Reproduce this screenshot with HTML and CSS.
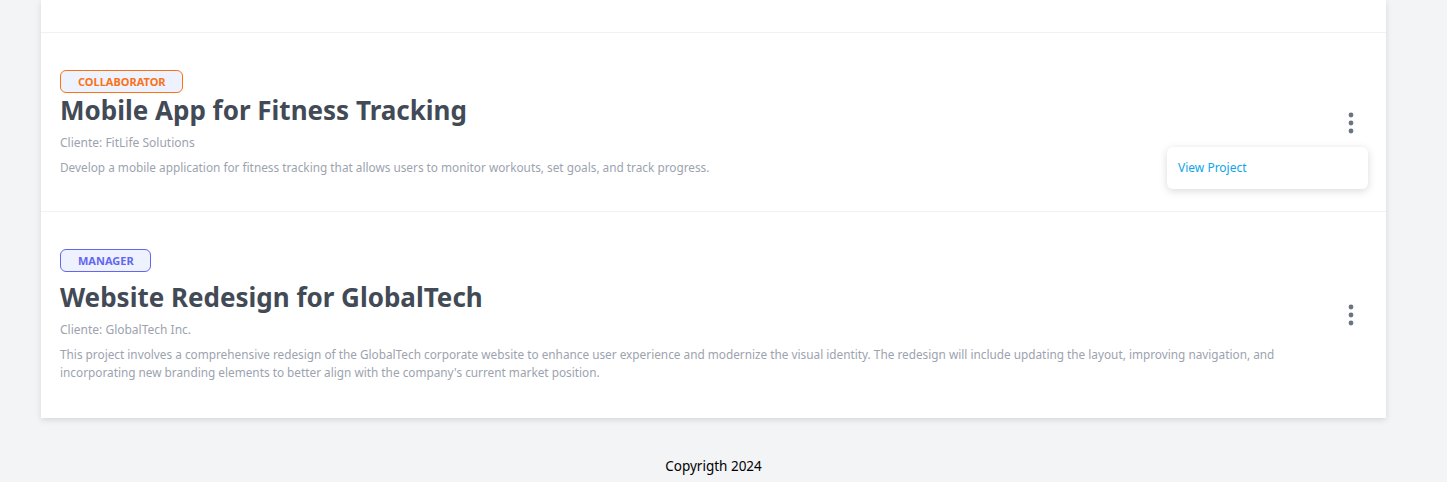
FILE: index.html
```html
<!DOCTYPE html>
<html>
<head>
<meta charset="utf-8">
<link rel="stylesheet" href="styles.css">
</head>
<body>
<main class="page">
  <section class="card">
    <div class="row row-top"></div>
    <div class="row">
      <div class="info">
        <span class="badge badge-collab">Collaborator</span>
        <h2 class="title">Mobile App for Fitness Tracking</h2>
        <p class="client">Cliente: FitLife Solutions</p>
        <p class="desc">Develop a mobile application for fitness tracking that allows users to monitor workouts, set goals, and track progress.</p>
      </div>
      <div class="actions">
        <button class="kebab" aria-label="menu">
          <svg width="6" height="22" viewBox="0 0 6 22"><circle cx="3" cy="3" r="2.4" fill="#6b7280"/><circle cx="3" cy="11" r="2.4" fill="#6b7280"/><circle cx="3" cy="19" r="2.4" fill="#6b7280"/></svg>
        </button>
        <div class="menu"><a class="menu-item" href="#">View Project</a></div>
      </div>
    </div>
    <div class="row row-last">
      <div class="info">
        <span class="badge badge-manager">Manager</span>
        <h2 class="title title-spaced">Website Redesign for GlobalTech</h2>
        <p class="client">Cliente: GlobalTech Inc.</p>
        <p class="desc">This project involves a comprehensive redesign of the GlobalTech corporate website to enhance user experience and modernize the visual identity. The redesign will include updating the layout, improving navigation, and incorporating new branding elements to better align with the company's current market position.</p>
      </div>
      <div class="actions">
        <button class="kebab" aria-label="menu">
          <svg width="6" height="22" viewBox="0 0 6 22"><circle cx="3" cy="3" r="2.4" fill="#6b7280"/><circle cx="3" cy="11" r="2.4" fill="#6b7280"/><circle cx="3" cy="19" r="2.4" fill="#6b7280"/></svg>
        </button>
      </div>
    </div>
  </section>
  <footer class="footer">Copyrigth 2024</footer>
</main>
</body>
</html>
```
FILE: styles.css
```css
html, body {
  margin: 0;
  padding: 0;
  background: #f3f4f6;
  font-family: "Noto Sans", "Open Sans", sans-serif;
}
.page {
  padding: 0 61px 0 41px;
}
.card {
  background: #fff;
  box-shadow: 0 2px 6px rgba(0,0,0,0.12);
}
.row {
  display: flex;
  align-items: center;
  padding: 36px 20px 35px 19px;
  border-top: 1px solid #f0f1f3;
}
.row-top {
  height: 32px;
  padding: 0;
  border-top: none;
}
.row-last {
  padding-bottom: 37px;
}
.info {
  flex: 1;
  min-width: 0;
  padding-right: 40px;
}
.badge {
  display: inline-block;
  box-sizing: border-box;
  height: 23px;
  line-height: 21px;
  padding: 0 16px 0 17px;
  border-radius: 6px;
  background: #eef2ff;
  font-size: 11px;
  font-weight: 700;
  text-transform: uppercase;
}
.badge-collab {
  border: 1px solid #f97316;
  color: #f97316;
}
.badge-manager {
  border: 1px solid #6366f1;
  color: #6366f1;
}
.title {
  margin: 1px 0 0;
  font-size: 26px;
  line-height: 32px;
  font-weight: 700;
  color: #424a56;
}
.title-spaced {
  margin-top: 9px;
}
.client {
  margin: 8px 0 0;
  font-size: 12px;
  line-height: 18px;
  color: #9ca3af;
}
.desc {
  margin: 6px 0 0;
  font-size: 11.8px;
  line-height: 18px;
  color: #9ca3af;
}
.actions {
  position: relative;
  width: 30px;
  display: flex;
  justify-content: center;
}
.kebab {
  border: 0;
  background: none;
  padding: 0;
  display: flex;
  cursor: pointer;
}
.menu {
  position: absolute;
  top: 35px;
  right: -2px;
  width: 201px;
  height: 42px;
  box-sizing: border-box;
  background: #fff;
  border-radius: 6px;
  box-shadow: 0 2px 8px rgba(0,0,0,0.15);
  display: flex;
  align-items: center;
  padding-left: 11px;
}
.menu-item {
  font-size: 12px;
  color: #0ea5e9;
  text-decoration: none;
}
.footer {
  text-align: center;
  padding: 39px 0 0 0;
  font-size: 13.5px;
  color: #000;
}
```
